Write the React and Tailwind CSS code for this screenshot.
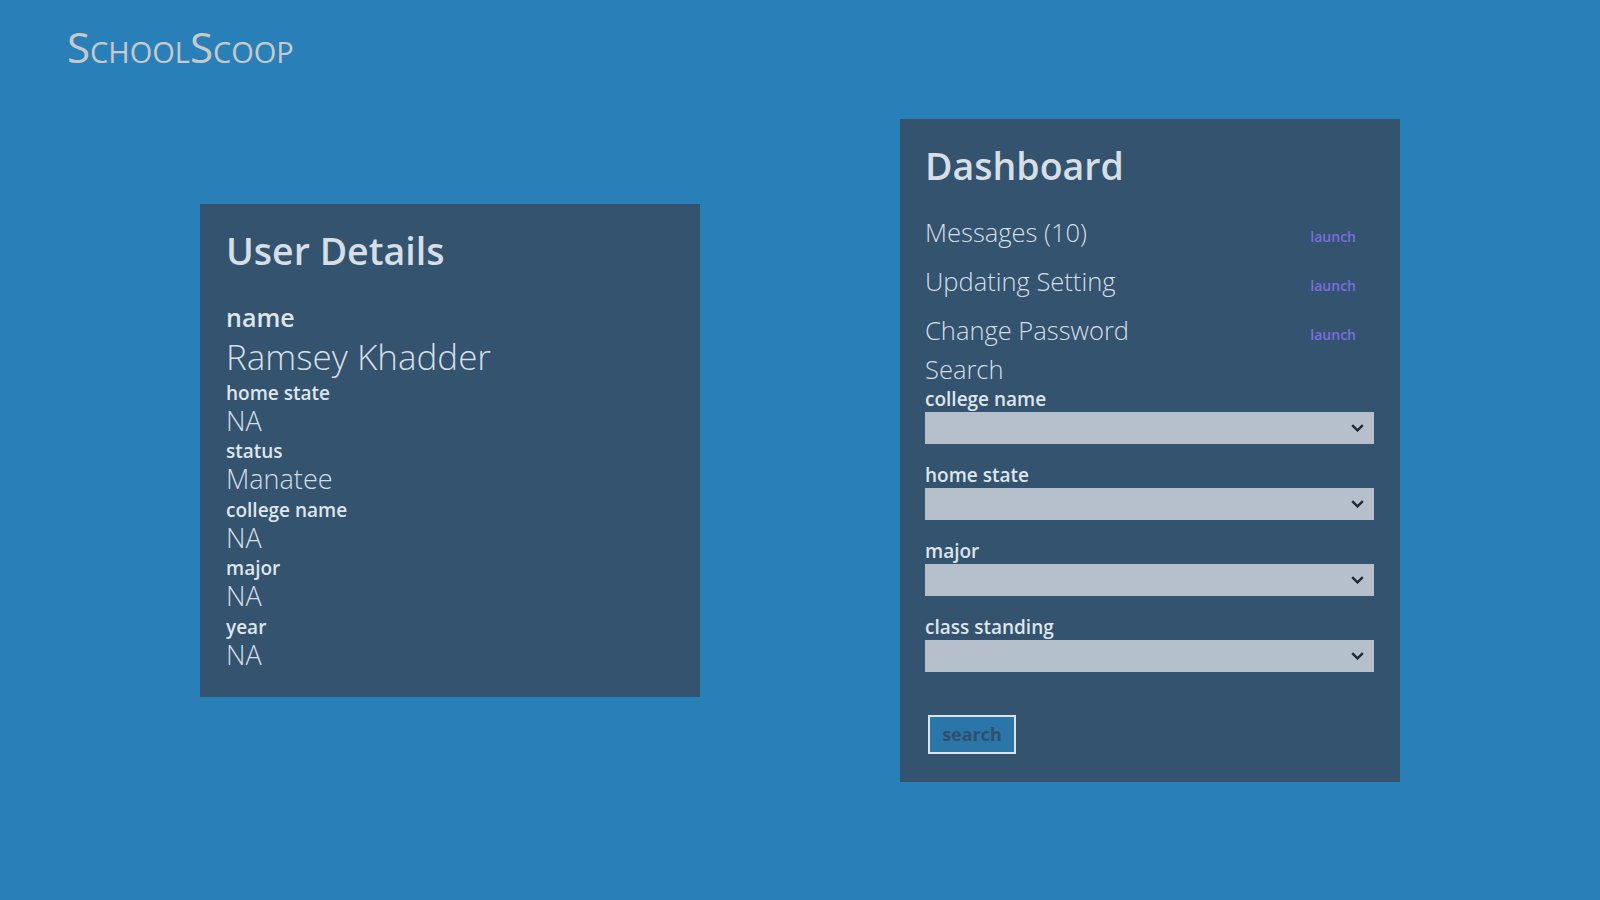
import React from 'react';

const font = { fontFamily: '"Open Sans", "Noto Sans", sans-serif' };

const details = [
  { label: 'home state', value: 'NA' },
  { label: 'status', value: 'Manatee' },
  { label: 'college name', value: 'NA' },
  { label: 'major', value: 'NA' },
  { label: 'year', value: 'NA' }
];

const links = ['Messages (10)', 'Updating Setting', 'Change Password'];

const filters = ['college name', 'home state', 'major', 'class standing'];

function Chevron() {
  return (
    <svg width="13" height="8" viewBox="0 0 13 8" fill="none">
      <path d="M1.2 1.2 6.5 6.4 11.8 1.2" stroke="#222a33" strokeWidth="2.4" />
    </svg>
  );
}

function UserDetails() {
  return (
    <section className="mt-[85px] h-[493px] w-[500px] bg-[#33536f] px-[26px] pt-[23px] text-[#d6dee6]">
      <h2 className="text-[37.5px] font-semibold leading-[48px]">User Details</h2>
      <p className="mt-[27px] text-[25px] font-semibold leading-[30px] text-[#dfe5eb]">name</p>
      <p className="mt-[4px] text-[35px] font-light leading-[42px]">Ramsey Khadder</p>
      {details.map((item) => (
        <div key={item.label}>
          <p className="mt-[2.5px] text-[19px] font-semibold leading-[24px] text-[#dfe5eb]">{item.label}</p>
          <p className="text-[27px] font-light leading-[32px]">{item.value}</p>
        </div>
      ))}
    </section>
  );
}

function Dashboard() {
  return (
    <section className="h-[663px] w-[500px] bg-[#33536f] pl-[25px] pr-[26px] pt-[23px] text-[#d6dee6]">
      <h2 className="text-[37.5px] font-semibold leading-[48px]">Dashboard</h2>
      <div className="mt-[18px]">
        {links.map((text) => (
          <div key={text} className="flex items-baseline justify-between pr-[18px]">
            <span className="text-[25.5px] font-light leading-[49px]">{text}</span>
            <a className="cursor-pointer text-[14px] font-semibold text-[#7d6ee0]">launch</a>
          </div>
        ))}
        <p className="text-[25.5px] font-light leading-[29px]">Search</p>
      </div>
      <div className="mt-[3px]">
        {filters.map((label) => (
          <div key={label} className="mb-[18.6px]">
            <p className="text-[19px] font-semibold leading-[24px] text-[#dfe5eb]">{label}</p>
            <div className="mt-[1.4px] flex h-[32px] items-center justify-end bg-[#b5c0cc] pr-[10px]">
              <Chevron />
            </div>
          </div>
        ))}
      </div>
      <button className="ml-[3px] mt-[24px] h-[39px] w-[88px] border-2 border-[#dde3e9] bg-[#2b76a9] text-[18px] font-bold text-[#2f4f6d]">
        search
      </button>
    </section>
  );
}

export default function App() {
  return (
    <div className="min-h-screen w-full bg-[#2980b9]" style={font}>
      <header className="pl-[67px] pt-[25px]">
        <h1 className="text-[42px] leading-[44px] text-[#c9c9c9] [font-variant:small-caps]">SchoolScoop</h1>
      </header>
      <main className="mt-[50px] flex items-start gap-[200px] pl-[200px]">
        <UserDetails />
        <Dashboard />
      </main>
    </div>
  );
}
